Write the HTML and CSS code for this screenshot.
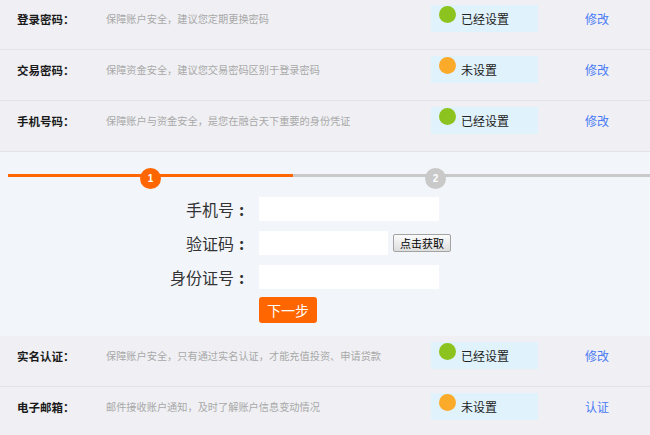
FILE: index.html
```html
<!DOCTYPE html>
<html lang="zh-CN">
<head>
<meta charset="utf-8">
<title>安全中心</title>
<link rel="stylesheet" href="styles.css">
</head>
<body>
<div class="page">
  <div class="row">
    <div class="label">登录密码：</div>
    <div class="desc">保障账户安全，建议您定期更换密码</div>
    <div class="badge"><span class="dot green"></span><span class="status">已经设置</span></div>
    <a class="link" href="#">修改</a>
  </div>
  <div class="row">
    <div class="label">交易密码：</div>
    <div class="desc">保障资金安全，建议您交易密码区别于登录密码</div>
    <div class="badge"><span class="dot orange"></span><span class="status">未设置</span></div>
    <a class="link" href="#">修改</a>
  </div>
  <div class="row">
    <div class="label">手机号码：</div>
    <div class="desc">保障账户与资金安全，是您在融合天下重要的身份凭证</div>
    <div class="badge"><span class="dot green"></span><span class="status">已经设置</span></div>
    <a class="link" href="#">修改</a>
  </div>

  <div class="panel">
    <div class="steps">
      <div class="seg done"></div>
      <div class="seg todo"></div>
      <span class="step step-1">1</span>
      <span class="step step-2">2</span>
    </div>
    <form class="form">
      <div class="frow">
        <label class="flabel">手机号<span class="colon">:</span></label>
        <input class="input" type="text">
      </div>
      <div class="frow">
        <label class="flabel">验证码<span class="colon">:</span></label>
        <input class="input short" type="text">
        <button class="code-btn" type="button">点击获取</button>
      </div>
      <div class="frow">
        <label class="flabel">身份证号<span class="colon">:</span></label>
        <input class="input" type="text">
      </div>
      <div class="actions">
        <button class="next-btn" type="button">下一步</button>
      </div>
    </form>
  </div>

  <div class="row">
    <div class="label">实名认证：</div>
    <div class="desc">保障账户安全，只有通过实名认证，才能充值投资、申请贷款</div>
    <div class="badge"><span class="dot green"></span><span class="status">已经设置</span></div>
    <a class="link" href="#">修改</a>
  </div>
  <div class="row">
    <div class="label">电子邮箱：</div>
    <div class="desc">邮件接收账户通知，及时了解账户信息变动情况</div>
    <div class="badge"><span class="dot orange"></span><span class="status">未设置</span></div>
    <a class="link" href="#">认证</a>
  </div>
</div>
</body>
</html>
```

FILE: styles.css
```css
html, body {
  margin: 0;
  padding: 0;
  background: #f0f0f4;
  font-family: "Noto Sans CJK SC", "Noto Sans", sans-serif;
}

.page {
  width: 650px;
  margin-top: -1px;
  overflow: hidden;
}

.row {
  height: 50px;
  border-bottom: 1px solid #e2e2e7;
  display: flex;
  align-items: flex-start;
  background: #f0f0f4;
}

.label {
  width: 89px;
  padding-left: 17px;
  font-size: 11.5px;
  font-weight: bold;
  color: #1a1a1a;
  line-height: 40px;
  white-space: nowrap;
}

.desc {
  width: 325px;
  font-size: 10.2px;
  color: #a8a8a8;
  line-height: 40px;
  white-space: nowrap;
}

.badge {
  margin-top: 6px;
  width: 107px;
  height: 27px;
  background: #e0f2fc;
  display: flex;
  align-items: flex-start;
}

.dot {
  width: 17px;
  height: 17px;
  border-radius: 50%;
  margin: 1px 0 0 8px;
  flex: none;
}

.dot.green { background: #8cc31f; }
.dot.orange { background: #fbaa29; }

.status {
  margin-left: 5px;
  font-size: 12px;
  color: #222;
  line-height: 27px;
}

.link {
  margin-left: 47px;
  font-size: 12px;
  line-height: 40px;
  color: #4a7bf5;
  text-decoration: none;
}

.panel {
  height: 184px;
  background: #f2f5fa;
  padding-top: 22px;
  box-sizing: border-box;
}

.steps {
  position: relative;
  margin-left: 8px;
  height: 3px;
  display: flex;
}

.seg.done {
  width: 285px;
  background: #ff6600;
}

.seg.todo {
  flex: 1;
  background: #c9c9c9;
}

.step {
  position: absolute;
  top: -6px;
  width: 21px;
  height: 21px;
  border-radius: 50%;
  color: #fff;
  font-size: 10px;
  font-weight: bold;
  line-height: 21px;
  text-align: center;
  font-family: "Liberation Sans", sans-serif;
}

.step-1 { left: 132px; background: #ff6600; }
.step-2 { left: 417px; background: #c9c9c9; }

.form {
  margin: 20px 0 0 0;
}

.frow {
  display: flex;
  align-items: center;
  height: 24px;
  margin-bottom: 10px;
}

.flabel {
  width: 249px;
  margin-right: 10px;
  text-align: right;
  font-size: 16px;
  color: #333;
  line-height: 24px;
  white-space: nowrap;
}

.colon {
  display: inline-block;
  width: 15px;
  text-align: center;
  font-weight: bold;
}

.input {
  width: 180px;
  height: 24px;
  box-sizing: border-box;
  border: none;
  background: #fff;
  padding: 0 4px;
  margin: 0;
  outline: none;
}

.input.short {
  width: 129px;
}

.code-btn {
  margin-left: 5px;
  width: 58px;
  height: 18px;
  padding: 0;
  box-sizing: border-box;
  border: 1px solid #a3a3a3;
  border-radius: 2px;
  background: linear-gradient(#fbfbfb, #dedede);
  font-family: "Noto Sans CJK SC", sans-serif;
  font-size: 11px;
  line-height: 16px;
  color: #000;
}

.actions {
  margin-top: -2px;
  padding-left: 259px;
}

.next-btn {
  width: 58px;
  height: 26px;
  padding: 0;
  border: none;
  border-radius: 3px;
  background: #ff6600;
  color: #fff;
  font-family: "Noto Sans CJK SC", sans-serif;
  font-size: 14px;
  line-height: 26px;
}
```
